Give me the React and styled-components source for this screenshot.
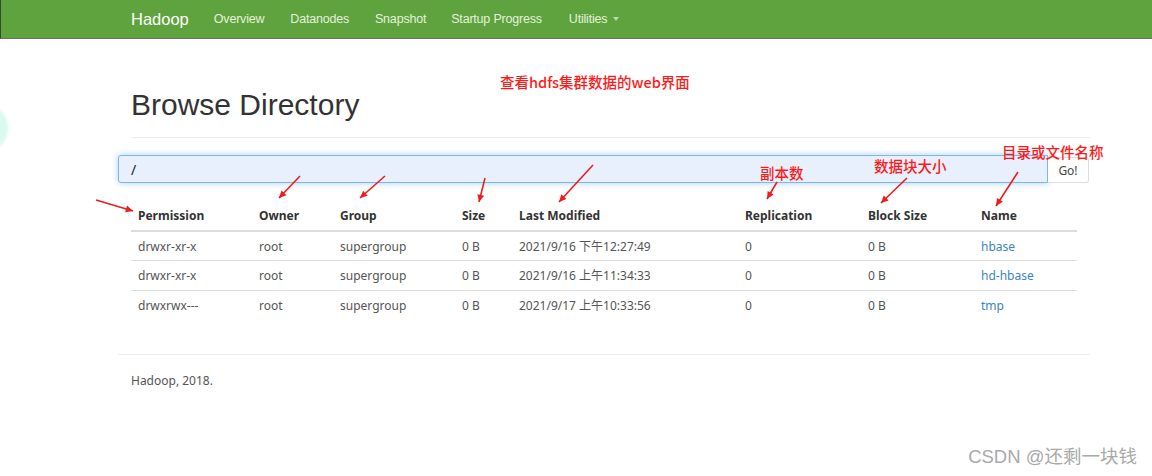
import React from "react";
import styled, { createGlobalStyle } from "styled-components";

const GlobalStyle = createGlobalStyle`
  html, body {
    margin: 0;
    padding: 0;
    background: #ffffff;
    font-family: "Noto Sans", "Noto Sans CJK SC", sans-serif;
    color: #333333;
  }
`;

const Page = styled.div`
  position: relative;
  width: 1152px;
  height: 476px;
  overflow: hidden;
  background: #ffffff;
`;

const NavBar = styled.nav`
  height: 39px;
  background: #5fa33e;
  border-bottom: 1px solid #6b6b6b;
  border-left: 1px solid #2f4f22;
  display: flex;
  align-items: center;
  padding-left: 130px;
  box-sizing: border-box;
`;

const Brand = styled.span`
  font-family: "Liberation Sans", Arial, sans-serif;
  font-size: 16.5px;
  color: #ffffff;
  margin-right: 25px;
`;

const NavLink = styled.span`
  font-family: "Liberation Sans", Arial, sans-serif;
  font-size: 12.5px;
  letter-spacing: -0.2px;
  color: #e4f1dc;
  margin-right: ${(p) => p.$gap || 24}px;
  display: inline-flex;
  align-items: center;
`;

const Caret = styled.span`
  display: inline-block;
  margin-left: 6px;
  border-top: 4px solid #b9dba8;
  border-left: 3px solid transparent;
  border-right: 3px solid transparent;
`;

const Container = styled.div`
  width: 972px;
  margin-left: 118px;
`;

const Header = styled.div`
  margin: 0 0 0 13px;
  padding-top: 48px;
  padding-bottom: 14px;
  border-bottom: 1px solid #eeeeee;
`;

const Title = styled.h1`
  margin: 0;
  font-family: "Liberation Sans", Arial, sans-serif;
  font-weight: 400;
  font-size: 30px;
  line-height: 36px;
  color: #333333;
`;

const InputGroup = styled.div`
  display: flex;
  align-items: flex-end;
  margin-top: 17px;
`;

const PathInput = styled.div`
  width: 930px;
  height: 28px;
  box-sizing: border-box;
  background: #e8f0fe;
  border: 1px solid #7fb6e6;
  border-radius: 3px 0 0 3px;
  box-shadow: 0 0 6px rgba(102, 175, 233, 0.6);
  display: flex;
  align-items: center;
  padding-left: 12px;
  font-size: 14px;
  color: #222222;
`;

const GoButton = styled.div`
  width: 41px;
  height: 26px;
  box-sizing: border-box;
  border: 1px solid #dddddd;
  border-left: none;
  border-radius: 0 3px 3px 0;
  display: flex;
  align-items: center;
  justify-content: center;
  font-size: 12px;
  color: #444444;
  background: #ffffff;
`;

const Table = styled.table`
  margin: 24px 0 0 13px;
  width: 946px;
  border-collapse: collapse;
  table-layout: fixed;
  font-size: 12px;
`;

const Th = styled.th`
  box-sizing: border-box;
  width: ${(p) => p.$w}px;
  text-align: left;
  font-weight: 700;
  color: #333333;
  line-height: 17px;
  padding: 0 7px 6px;
  border-bottom: 2px solid #dddddd;
`;

const Td = styled.td`
  box-sizing: border-box;
  padding: 1px 7px 0;
  height: 30px;
  line-height: 17px;
  color: ${(p) => (p.$link ? "#3b84c4" : "#555555")};
  border-top: 1px solid #dddddd;
  white-space: nowrap;
  tr:first-child > & {
    border-top: none;
    height: 29px;
  }
`;

const Footer = styled.div`
  margin-top: 34px;
  border-top: 1px solid #eeeeee;
  padding: 17px 0 0 13px;
  font-size: 12px;
  color: #555555;
`;

const Note = styled.span`
  position: absolute;
  left: ${(p) => p.$x}px;
  top: ${(p) => p.$y}px;
  font-family: "Noto Sans CJK SC", sans-serif;
  font-size: 14.5px;
  font-weight: 500;
  color: #ff1a1a;
  white-space: nowrap;
`;

const Arrows = styled.svg`
  position: absolute;
  left: 0;
  top: 0;
  pointer-events: none;
`;

const Bubble = styled.div`
  position: absolute;
  left: -22px;
  top: 108px;
  width: 30px;
  height: 40px;
  border-radius: 50%;
  background: #d9fbef;
  filter: blur(1px);
`;

const Watermark = styled.span`
  position: absolute;
  right: 15px;
  bottom: 8px;
  font-family: "Liberation Sans", "Noto Sans CJK SC", sans-serif;
  font-size: 18.5px;
  color: #a9a9a9;
`;

const columns = [
  ["Permission", 121],
  ["Owner", 81],
  ["Group", 122],
  ["Size", 57],
  ["Last Modified", 226],
  ["Replication", 123],
  ["Block Size", 113],
  ["Name", 103],
];

const rows = [
  ["drwxr-xr-x", "root", "supergroup", "0 B", "2021/9/16 下午12:27:49", "0", "0 B", "hbase"],
  ["drwxr-xr-x", "root", "supergroup", "0 B", "2021/9/16 上午11:34:33", "0", "0 B", "hd-hbase"],
  ["drwxrwx---", "root", "supergroup", "0 B", "2021/9/17 上午10:33:56", "0", "0 B", "tmp"],
];

// 빨간 화살표: [x1, y1, x2, y2]
const arrows = [
  [96, 200, 133, 211],
  [300, 176, 279, 198],
  [385, 176, 360, 198],
  [485, 178, 479, 202],
  [593, 165, 559, 202],
  [777, 182, 767, 199],
  [907, 178, 881, 203],
  [1018, 172, 996, 206],
];

function Arrow({ x1, y1, x2, y2 }) {
  const a = Math.atan2(y2 - y1, x2 - x1);
  const len = 8;
  const p1 = [x2 - len * Math.cos(a - 0.45), y2 - len * Math.sin(a - 0.45)];
  const p2 = [x2 - len * Math.cos(a + 0.45), y2 - len * Math.sin(a + 0.45)];
  return (
    <g>
      <line x1={x1} y1={y1} x2={x2} y2={y2} stroke="#ee1c1c" strokeWidth="1.6" />
      <polygon points={`${x2},${y2} ${p1.join(",")} ${p2.join(",")}`} fill="#ee1c1c" />
    </g>
  );
}

export default function App() {
  return (
    <Page>
      <GlobalStyle />
      <NavBar>
        <Brand>Hadoop</Brand>
        <NavLink $gap={26}>Overview</NavLink>
        <NavLink $gap={26}>Datanodes</NavLink>
        <NavLink $gap={25}>Snapshot</NavLink>
        <NavLink $gap={27}>Startup Progress</NavLink>
        <NavLink>
          Utilities
          <Caret />
        </NavLink>
      </NavBar>

      <Container>
        <Header>
          <Title>Browse Directory</Title>
        </Header>

        <InputGroup>
          <PathInput>/</PathInput>
          <GoButton>Go!</GoButton>
        </InputGroup>

        <Table>
          <thead>
            <tr>
              {columns.map(([label, w]) => (
                <Th key={label} $w={w}>
                  {label}
                </Th>
              ))}
            </tr>
          </thead>
          <tbody>
            {rows.map((r, i) => (
              <tr key={i}>
                {r.map((c, j) => (
                  <Td key={j} $link={j === 7}>
                    {c}
                  </Td>
                ))}
              </tr>
            ))}
          </tbody>
        </Table>

        <Footer>Hadoop, 2018.</Footer>
      </Container>

      <Bubble />
      <Note $x={500} $y={71}>查看hdfs集群数据的web界面</Note>
      <Note $x={760} $y={162}>副本数</Note>
      <Note $x={874} $y={155}>数据块大小</Note>
      <Note $x={1002} $y={141}>目录或文件名称</Note>

      <Arrows width="1152" height="476">
        {arrows.map(([x1, y1, x2, y2], i) => (
          <Arrow key={i} x1={x1} y1={y1} x2={x2} y2={y2} />
        ))}
      </Arrows>

      <Watermark>CSDN @还剩一块钱</Watermark>
    </Page>
  );
}
